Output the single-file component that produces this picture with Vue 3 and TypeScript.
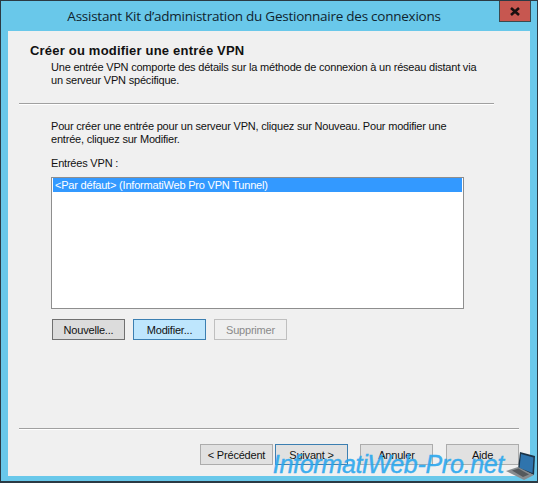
<template>
  <div class="window">
    <div class="titlebar">
      <span class="title">Assistant Kit d’administration du Gestionnaire des connexions</span>
      <button class="close">
        <svg width="10" height="9" viewBox="0 0 10 9">
          <path d="M1 1 L9 8 M9 1 L1 8" stroke="#1a1010" stroke-width="2.6" fill="none" />
        </svg>
      </button>
    </div>
    <div class="content">
      <div class="header">
        <h4>Créer ou modifier une entrée VPN</h4>
        <p>Une entrée VPN comporte des détails sur la méthode de connexion à un réseau distant via<br />un serveur VPN spécifique.</p>
      </div>
      <div class="rule rule-top"></div>
      <div class="body">
        <p class="intro">Pour créer une entrée pour un serveur VPN, cliquez sur Nouveau. Pour modifier une<br />entrée, cliquez sur Modifier.</p>
        <label class="list-label">Entrées VPN :</label>
        <div class="listbox">
          <div v-for="entry in entries" :key="entry" class="list-item">{{ entry }}</div>
        </div>
        <div class="list-actions">
          <button class="btn pressed">Nouvelle...</button>
          <button class="btn hover">Modifier...</button>
          <button class="btn" disabled>Supprimer</button>
        </div>
      </div>
      <div class="rule rule-bottom"></div>
      <div class="footer">
        <button class="btn">&lt; Précédent</button>
        <button class="btn focused">Suivant &gt;</button>
        <button class="btn spaced">Annuler</button>
        <button class="btn spaced last">Aide</button>
      </div>
    </div>
    <div class="watermark">
      <span>InformatiWeb-Pro.net</span>
      <svg width="31" height="30" viewBox="0 0 31 30">
        <path d="M14 1 L29 5 L28 24 L12 18 Z" fill="#1c3346" />
        <path d="M15 3 L27.5 6.5 L26.5 22 L13.5 17 Z" fill="#2f74ad" />
        <path d="M0 20 L12 16 L28 24 L18 29 Z" fill="#878b8e" />
        <path d="M6 19.5 L12.5 17.5 L23 23.5 L17 26 Z" fill="#55595c" />
      </svg>
    </div>
  </div>
</template>

<script setup lang="ts">
const entries: string[] = ['<Par défaut> (InformatiWeb Pro VPN Tunnel)'];
</script>

<style>
html, body {
  margin: 0;
  background: #2b3a44;
}
</style>

<style scoped>
.window {
  position: relative;
  box-sizing: border-box;
  width: 538px;
  height: 483px;
  border: 1px solid #2b3a44;
  border-bottom-width: 2px;
  background: #69c8ea;
  padding: 0 7px 5px;
  display: flex;
  flex-direction: column;
  font-family: "Liberation Sans", Arial, sans-serif;
  font-size: 11px;
  letter-spacing: -0.2px;
  color: #111;
  overflow: hidden;
}
.titlebar {
  height: 30px;
  flex: none;
  position: relative;
  display: flex;
  justify-content: center;
  align-items: center;
  padding-right: 30px;
}
.title {
  font-family: "Open Sans", sans-serif;
  font-size: 13.5px;
  letter-spacing: -0.25px;
  color: #10242e;
  white-space: nowrap;
}
.close {
  position: absolute;
  top: 0;
  right: -1px;
  box-sizing: border-box;
  width: 32px;
  height: 21px;
  padding: 0;
  border: 1px solid #3a4a50;
  border-top: none;
  background: #c75750;
  display: flex;
  align-items: center;
  justify-content: center;
}
.content {
  flex: 1;
  background: #f0f0f0;
  display: flex;
  flex-direction: column;
}
.header {
  padding: 12px 0 0 22px;
}
h4 {
  margin: 0;
  font-size: 13px;
  letter-spacing: 0.2px;
  line-height: 16px;
  font-weight: 700;
  color: #111;
}
.header p {
  margin: 2px 0 0 21px;
  line-height: 13px;
}
.rule {
  height: 1px;
  background: #a0a0a0;
  border-bottom: 1px solid #fff;
  margin-left: 11px;
}
.rule-top {
  margin-top: 16px;
  margin-right: 36px;
}
.rule-bottom {
  margin-right: 11px;
}
.body {
  flex: 1;
  padding: 15px 0 0 43px;
}
.intro {
  margin: 0;
  line-height: 13px;
}
.list-label {
  display: block;
  margin-top: 11px;
  line-height: 13px;
}
.listbox {
  box-sizing: border-box;
  width: 413px;
  height: 132px;
  margin-top: 7px;
  border: 1px solid #8e8e8e;
  background: #fff;
  padding: 0 1px;
}
.list-item {
  height: 14px;
  line-height: 14px;
  padding-left: 2px;
  background: #3399ff;
  color: #fff;
}
.list-actions {
  display: flex;
  gap: 8px;
  margin: 10px 0 0 1px;
}
.btn {
  box-sizing: border-box;
  width: 73px;
  height: 21px;
  padding: 0;
  border: 1px solid #acacac;
  background: #e1e1e1;
  font: inherit;
  letter-spacing: inherit;
  color: #111;
}
.btn.pressed {
  border-color: #707070;
  background: #dcdcdc;
}
.btn.hover {
  border-color: #3c7fb1;
  background: #bee6fd;
}
.btn.focused {
  border-color: #3c7fb1;
}
.btn:disabled {
  background: #efefef;
  border-color: #bfbfbf;
  color: #8a8a8a;
}
.footer {
  display: flex;
  gap: 2px;
  padding: 14px 11px 11px 192px;
}
.btn.spaced {
  margin-left: 10px;
}
.btn.spaced.last {
  margin-left: 11px;
}
.watermark {
  position: absolute;
  right: 0;
  bottom: 0;
  display: flex;
  align-items: flex-end;
  gap: 2px;
  height: 34px;
}
.watermark span {
  font-size: 25px;
  font-style: italic;
  letter-spacing: -0.3px;
  line-height: 28px;
  color: #2aa7ee;
  -webkit-text-stroke: 0.4px #2aa7ee;
  opacity: 0.9;
  white-space: nowrap;
  margin-bottom: 3px;
}
</style>
